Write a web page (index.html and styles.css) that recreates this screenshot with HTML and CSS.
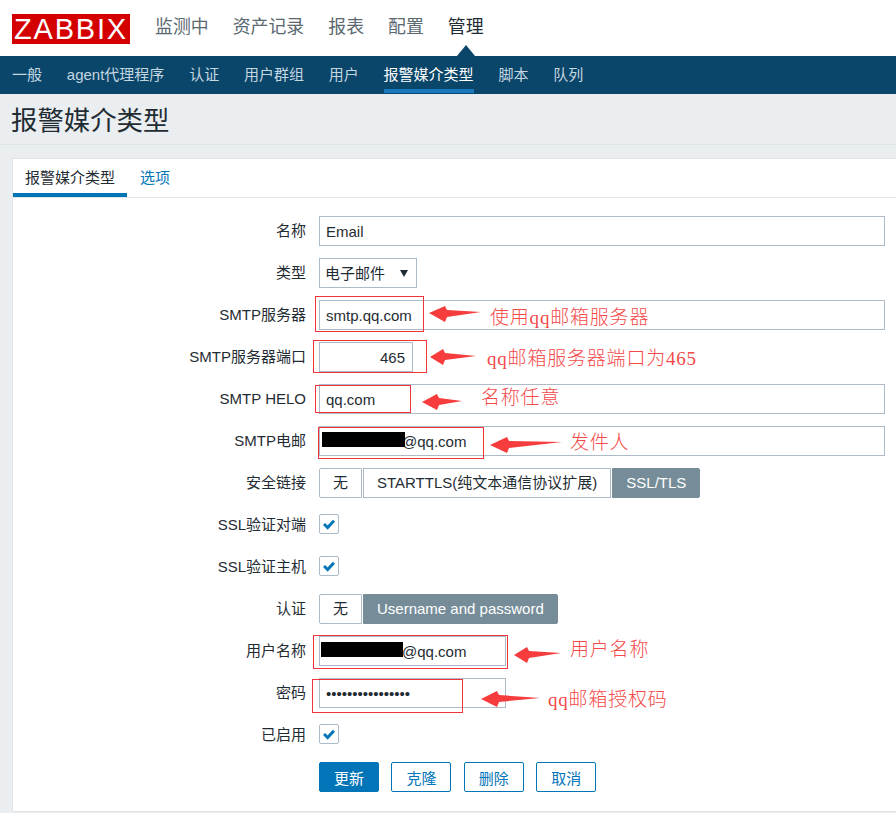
FILE: index.html
```html
<!DOCTYPE html>
<html lang="zh-CN">
<head>
    <meta charset="UTF-8">
    <title>报警媒介类型</title>
    <link rel="stylesheet" href="styles.css">
</head>
<body>
    <header class="top-bar">
        <div class="logo">ZABBIX</div>
        <nav class="main-nav">
            <a>监测中</a>
            <a>资产记录</a>
            <a>报表</a>
            <a>配置</a>
            <a class="active">管理</a>
        </nav>
    </header>

    <nav class="sub-nav">
        <a>一般</a>
        <a>agent代理程序</a>
        <a>认证</a>
        <a>用户群组</a>
        <a>用户</a>
        <a class="active">报警媒介类型</a>
        <a>脚本</a>
        <a>队列</a>
    </nav>

    <main class="content">
        <h1>报警媒介类型</h1>

        <section class="panel">
            <div class="tabs">
                <a class="active">报警媒介类型</a>
                <a>选项</a>
            </div>

            <form class="form">
                <label>名称</label>
                <div><input class="wide" type="text" value="Email"></div>

                <label>类型</label>
                <div><div class="select">电子邮件</div></div>

                <label>SMTP服务器</label>
                <div><input class="wide" type="text" value="smtp.qq.com"></div>

                <label>SMTP服务器端口</label>
                <div><input class="port" type="text" value="465"></div>

                <label>SMTP HELO</label>
                <div><input class="wide" type="text" value="qq.com"></div>

                <label>SMTP电邮</label>
                <div><input class="wide masked" type="text" value="@qq.com"></div>

                <label>安全链接</label>
                <div class="segments">
                    <span>无</span>
                    <span>STARTTLS(纯文本通信协议扩展)</span>
                    <span class="selected">SSL/TLS</span>
                </div>

                <label>SSL验证对端</label>
                <div class="check-cell"><span class="checkbox"><svg viewBox="0 0 20 20"><path d="M4.5 10l4 4L15.5 6.5"/></svg></span></div>

                <label>SSL验证主机</label>
                <div class="check-cell"><span class="checkbox"><svg viewBox="0 0 20 20"><path d="M4.5 10l4 4L15.5 6.5"/></svg></span></div>

                <label>认证</label>
                <div class="segments">
                    <span>无</span>
                    <span class="selected">Username and password</span>
                </div>

                <label>用户名称</label>
                <div><input class="medium masked-user" type="text" value="@qq.com"></div>

                <label>密码</label>
                <div><input class="medium" type="password" value="1234567890123456"></div>

                <label>已启用</label>
                <div class="check-cell"><span class="checkbox"><svg viewBox="0 0 20 20"><path d="M4.5 10l4 4L15.5 6.5"/></svg></span></div>

                <div class="buttons">
                    <button class="primary" type="button">更新</button>
                    <button type="button">克隆</button>
                    <button type="button">删除</button>
                    <button type="button">取消</button>
                </div>
            </form>
        </section>
    </main>

    <!-- red marks drawn on top of the screenshot -->
    <svg class="notes" viewBox="0 0 896 813">
        <rect class="blackout" x="322" y="432" width="83" height="15"/>
        <rect class="blackout" x="321" y="642" width="82" height="15"/>

        <rect class="box" x="315.5" y="296.5" width="108" height="35"/>
        <rect class="box" x="313.5" y="340.5" width="113" height="32"/>
        <rect class="box" x="315.5" y="385.5" width="95" height="27"/>
        <rect class="box" x="318.5" y="427.5" width="165" height="31"/>
        <rect class="box" x="313.5" y="635.5" width="194" height="33"/>
        <rect class="box" x="312.5" y="679.5" width="150" height="33"/>

        <polygon class="arrow" points="429,313 445,306 447,310 481,312 447,317 445,322"/>
        <polygon class="arrow" points="430,357 443,349 445,353 476,356 445,360 443,365"/>
        <polygon class="arrow" points="422,402 437,394 439,398 462,401 439,405 437,410"/>
        <polygon class="arrow" points="490,445 507,437 509,441 562,442 509,448 507,453"/>
        <polygon class="arrow" points="514,655 527,647 529,651 561,653 529,658 527,663"/>
        <polygon class="arrow" points="481,699 497,691 499,695 540,698 499,702 497,707"/>

        <text class="note" x="490" y="324">使用qq邮箱服务器</text>
        <text class="note" x="487" y="365">qq邮箱服务器端口为465</text>
        <text class="note" x="481" y="404">名称任意</text>
        <text class="note" x="570" y="449">发件人</text>
        <text class="note" x="570" y="656">用户名称</text>
        <text class="note" x="548" y="706">qq邮箱授权码</text>
    </svg>
</body>
</html>
```

FILE: styles.css
```css
html, body {
    margin: 0;
    height: 813px;
    overflow: hidden;
}

body {
    position: relative;
    font-family: "Liberation Sans", "Noto Sans CJK SC", sans-serif;
    font-size: 15px;
    color: #1f2c33;
    background-color: #ebeef0;
}

.top-bar {
    display: flex;
    align-items: flex-start;
    height: 56px;
    background-color: #fff;
}

.logo {
    width: 118px;
    height: 30px;
    margin: 14px 0 0 12px;
    background-color: #d40000;
    color: #fff;
    font-size: 29px;
    line-height: 30px;
    letter-spacing: 1.8px;
    text-align: center;
}

.main-nav {
    position: relative;
    display: flex;
    gap: 24px;
    margin: 14px 0 0 25px;
    font-size: 17.9px;
    line-height: 26px;
    color: #5a6870;
}

.main-nav .active {
    position: relative;
    color: #1f2c33;
}

/* small triangle pointing at the sub menu */
.main-nav .active::after {
    content: "";
    position: absolute;
    left: 50%;
    top: 31px;
    margin-left: -9px;
    border-left: 9px solid transparent;
    border-right: 9px solid transparent;
    border-bottom: 11px solid #0a466a;
}

.sub-nav {
    display: flex;
    gap: 24.8px;
    height: 38px;
    padding-left: 12px;
    background-color: #0a466a;
    color: #c4d6e0;
    line-height: 37px;
}

.sub-nav a {
    height: 38px;
    box-sizing: border-box;
}

.sub-nav .active {
    color: #fff;
    height: 37px;
    border-bottom: 4px solid #1a78bc;
}

h1 {
    margin: 0;
    height: 50px;
    border-bottom: 1px solid #dfe4e7;
    padding-left: 11px;
    font-size: 26.4px;
    font-weight: normal;
    line-height: 54px;
}

.panel {
    height: 652px;
    margin: 13px 0 0 12px;
    background-color: #fff;
    border: 1px solid #dfe4e7;
    border-right: none;
}

.tabs {
    display: flex;
    gap: 1px;
    height: 38px;
    border-bottom: 1px solid #dfe4e7;
    line-height: 38px;
    color: #0275b8;
}

.tabs a {
    padding: 0 12px;
}

.tabs .active {
    height: 34px;
    color: #1f2c33;
    border-bottom: 4px solid #0275b8;
}

.form {
    display: grid;
    grid-template-columns: 294px 1fr;
    grid-auto-rows: 30px;
    column-gap: 12px;
    row-gap: 12px;
    padding-top: 18px;
}

.form label {
    padding-right: 1px;
    text-align: right;
    line-height: 29px;
}

input {
    display: block;
    box-sizing: border-box;
    height: 30px;
    padding: 0 6px;
    border: 1px solid #acbbc7;
    font-family: inherit;
    font-size: 15px;
    color: #1f2c33;
    background-color: #fff;
}

.wide {
    width: 566px;
}

.port {
    width: 94px;
    text-align: right;
    padding-right: 7px;
}

.medium {
    width: 187px;
}

.masked {
    padding-left: 82px;
}

.masked-user {
    padding-left: 82px;
}

.select {
    position: relative;
    box-sizing: border-box;
    width: 98px;
    height: 30px;
    padding-left: 5px;
    border: 1px solid #acbbc7;
    line-height: 29px;
}

.select::after {
    content: "";
    position: absolute;
    right: 8px;
    top: 11px;
    border-left: 4px solid transparent;
    border-right: 4px solid transparent;
    border-top: 7px solid #1f2c33;
}

.segments {
    display: flex;
    gap: 1px;
}

.segments span {
    box-sizing: border-box;
    height: 30px;
    padding: 0 13px;
    border: 1px solid #acbbc7;
    line-height: 28px;
    white-space: nowrap;
}

.segments span:first-child {
    width: 43px;
    border-radius: 2px 0 0 2px;
    text-align: center;
}

.segments .selected {
    background-color: #768d99;
    border-color: #768d99;
    border-radius: 0 2px 2px 0;
    color: #fff;
}

.check-cell {
    display: flex;
    align-items: center;
}

.checkbox {
    box-sizing: border-box;
    width: 20px;
    height: 20px;
    margin-top: -2px;
    border: 1px solid #acbbc7;
    border-radius: 2px;
}

.checkbox svg {
    display: block;
    width: 18px;
    height: 18px;
    fill: none;
    stroke: #0275b8;
    stroke-width: 3.2;
}

.buttons {
    grid-column: 2;
    display: flex;
    gap: 12.4px;
}

button {
    box-sizing: border-box;
    width: 60px;
    height: 30px;
    padding: 0;
    border: 1px solid #0275b8;
    border-radius: 2px;
    background-color: #fff;
    color: #0275b8;
    font-family: inherit;
    font-size: 15px;
}

button.primary {
    background-color: #0275b8;
    color: #fff;
}

.notes {
    position: absolute;
    left: 0;
    top: 0;
    width: 896px;
    height: 813px;
}

.blackout {
    fill: #000;
}

.box {
    fill: none;
    stroke: #f0343a;
    stroke-width: 1;
}

.arrow {
    fill: #f63c3c;
}

.note {
    fill: #f44a4a;
    font-family: "Liberation Serif", "Noto Sans CJK SC", serif;
    font-size: 19px;
    font-weight: 300;
    letter-spacing: 0.8px;
}
```
